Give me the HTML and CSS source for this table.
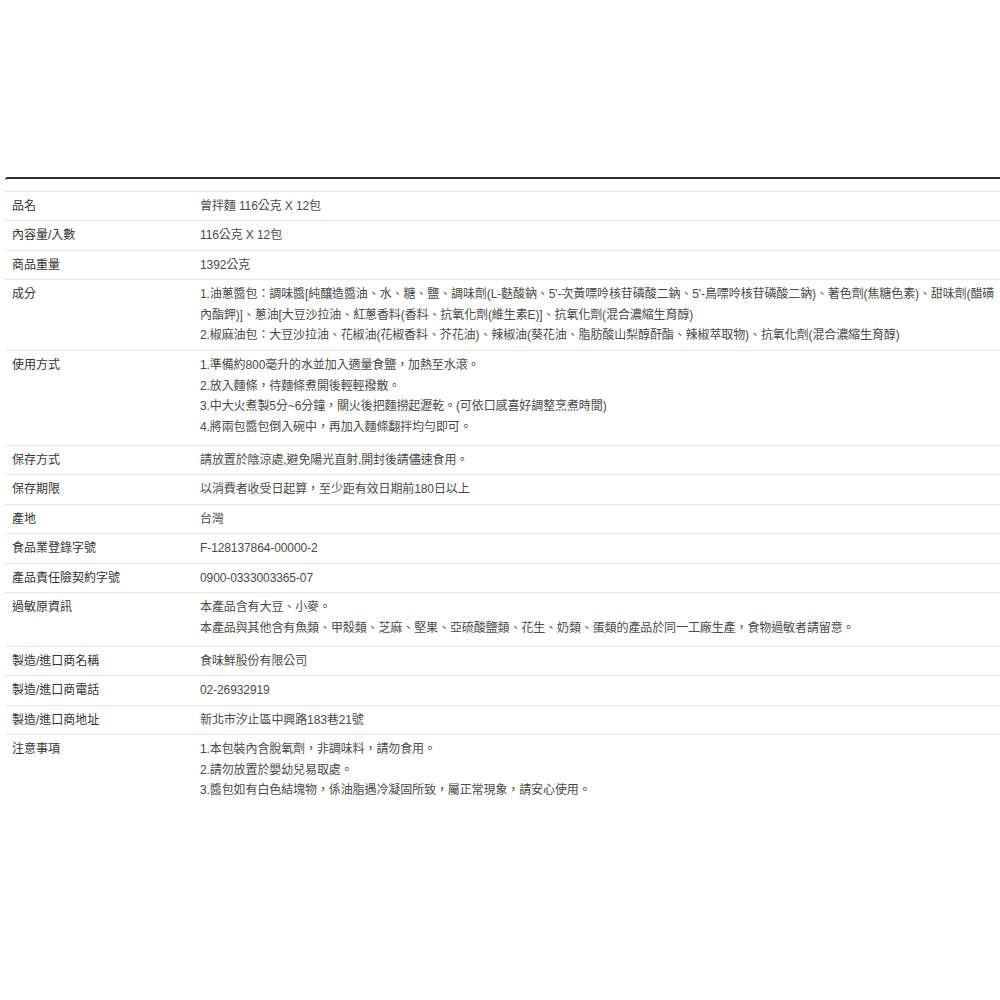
FILE: index.html
```html
<!DOCTYPE html>
<html lang="zh-Hant">
<head>
<meta charset="utf-8">
<title>商品規格</title>
<link rel="stylesheet" href="styles.css">
</head>
<body>
<div class="spec">
  <table class="spec-table">
    <tbody>
      <tr><td class="label">品名</td><td class="value">曾拌麵 116公克 X 12包</td></tr>
      <tr><td class="label">內容量/入數</td><td class="value">116公克 X 12包</td></tr>
      <tr><td class="label">商品重量</td><td class="value">1392公克</td></tr>
      <tr class="row-extra1"><td class="label">成分</td><td class="value">
        <div>1.油蔥醬包：調味醬[純釀造醬油、水、糖、鹽、調味劑(L-麩酸鈉、5'-次黃嘌呤核苷磷酸二鈉、5'-鳥嘌呤核苷磷酸二鈉)、著色劑(焦糖色素)、甜味劑(醋磺內酯鉀)]、蔥油[大豆沙拉油、紅蔥香料(香料、抗氧化劑(維生素E)]、抗氧化劑(混合濃縮生育醇)</div>
        <div>2.椒麻油包：大豆沙拉油、花椒油(花椒香料、芥花油)、辣椒油(葵花油、脂肪酸山梨醇酐酯、辣椒萃取物)、抗氧化劑(混合濃縮生育醇)</div>
      </td></tr>
      <tr class="row-extra4"><td class="label">使用方式</td><td class="value">
        <div>1.準備約800毫升的水並加入適量食鹽，加熱至水滾。</div>
        <div>2.放入麵條，待麵條煮開後輕輕撥散。</div>
        <div>3.中大火煮製5分~6分鐘，關火後把麵撈起瀝乾。(可依口感喜好調整烹煮時間)</div>
        <div>4.將兩包醬包倒入碗中，再加入麵條翻拌均勻即可。</div>
      </td></tr>
      <tr><td class="label">保存方式</td><td class="value">請放置於陰涼處,避免陽光直射,開封後請儘速食用。</td></tr>
      <tr><td class="label">保存期限</td><td class="value">以消費者收受日起算，至少距有效日期前180日以上</td></tr>
      <tr><td class="label">產地</td><td class="value">台灣</td></tr>
      <tr><td class="label">食品業登錄字號</td><td class="value">F-128137864-00000-2</td></tr>
      <tr><td class="label">產品責任險契約字號</td><td class="value">0900-0333003365-07</td></tr>
      <tr class="row-extra4"><td class="label">過敏原資訊</td><td class="value">
        <div>本產品含有大豆、小麥。</div>
        <div>本產品與其他含有魚類、甲殼類、芝麻、堅果、亞硫酸鹽類、花生、奶類、蛋類的產品於同一工廠生產，食物過敏者請留意。</div>
      </td></tr>
      <tr><td class="label">製造/進口商名稱</td><td class="value">食味鮮股份有限公司</td></tr>
      <tr><td class="label">製造/進口商電話</td><td class="value">02-26932919</td></tr>
      <tr><td class="label">製造/進口商地址</td><td class="value">新北市汐止區中興路183巷21號</td></tr>
      <tr class="row-last"><td class="label">注意事項</td><td class="value">
        <div>1.本包裝內含脫氧劑，非調味料，請勿食用。</div>
        <div>2.請勿放置於嬰幼兒易取處。</div>
        <div>3.醬包如有白色結塊物，係油脂遇冷凝固所致，屬正常現象，請安心使用。</div>
      </td></tr>
    </tbody>
  </table>
</div>
</body>
</html>
```
FILE: styles.css
```css
html, body {
  margin: 0;
  padding: 0;
  background: #ffffff;
}

body {
  font-family: "Liberation Sans", Arial, "Noto Sans CJK TC", sans-serif;
  font-size: 12px;
  color: #444;
}

.spec {
  margin: 177px 0 0 5px;
  border-top: 2px solid #2b2b2b;
  border-top-left-radius: 3px;
  padding-top: 12px;
}

.spec-table {
  width: 995px;
  border-collapse: collapse;
  table-layout: fixed;
}

.spec-table td {
  border-top: 1px solid #e6e6e6;
  padding: 4px 0;
  line-height: 20.4px;
  vertical-align: top;
}

.spec-table .label {
  width: 188px;
  padding-left: 7px;
  color: #333;
}

.spec-table .value {
  padding-right: 0;
  color: #4a4a4a;
  letter-spacing: -0.1px;
}

.row-extra1 td {
  padding-bottom: 5px;
}

.row-extra4 td {
  padding-bottom: 8px;
}

.row-last td {
  padding-bottom: 8px;
}
```
